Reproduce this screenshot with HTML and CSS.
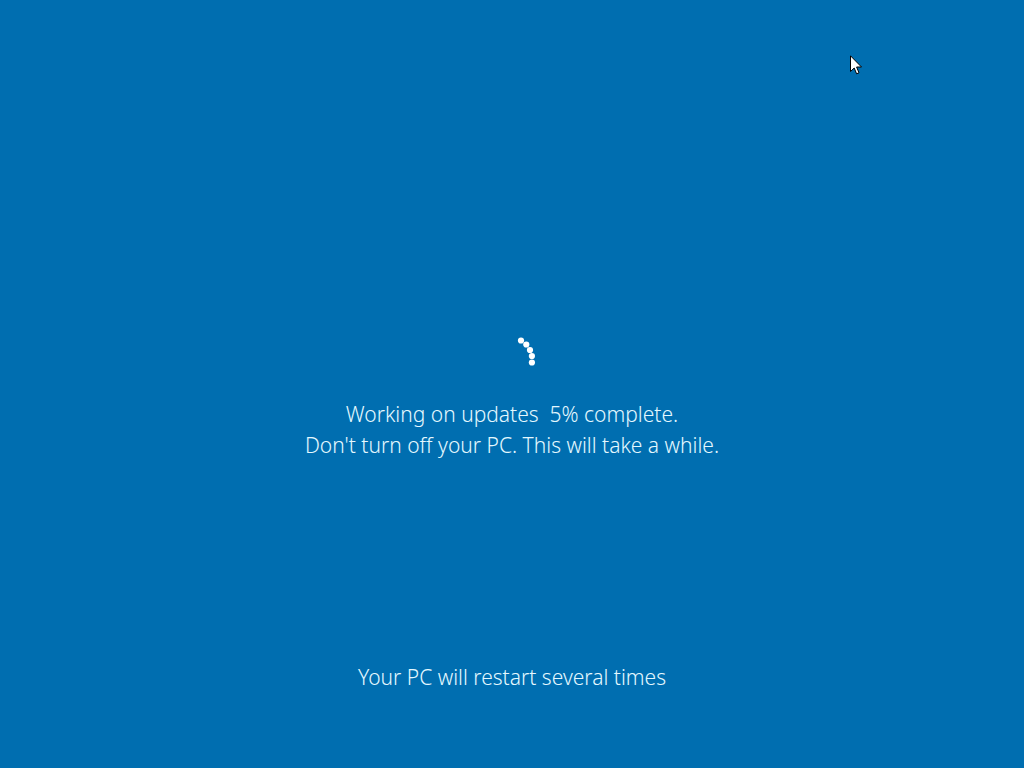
FILE: index.html
```html
<!DOCTYPE html>
<html lang="en">
<head>
    <meta charset="UTF-8">
    <meta name="viewport" content="width=device-width, initial-scale=1.0">
    <title>Working on updates</title>
    <link rel="stylesheet" href="styles.css">
</head>
<body>
    <main class="update-screen">
        <div class="progress">
            <svg class="spinner" width="60" height="60" viewBox="0 0 60 60" aria-hidden="true">
                <circle cx="39" cy="18.5" r="3.1"/>
                <circle cx="44.3" cy="22.5" r="3.1"/>
                <circle cx="48" cy="28" r="3.1"/>
                <circle cx="49.9" cy="34" r="3.1"/>
                <circle cx="49.9" cy="40.5" r="3.1"/>
            </svg>
            <p class="message">Working on updates&nbsp; 5% complete.<br>Don't turn off your PC. This will take a while.</p>
        </div>
        <p class="message">Your PC will restart several times</p>
    </main>

    <!-- Mouse pointer -->
    <svg class="cursor" width="12" height="20" viewBox="0 0 12 20" aria-hidden="true">
        <path d="M.5 .8V16.5L4.2 13L6.6 18.8L9 17.8L6.6 12H11.5Z"/>
    </svg>
</body>
</html>
```

FILE: styles.css
```css
body {
    margin: 0;
    background: #006eb0;
    color: #e4f8ff;
    font-family: "Segoe UI", "Noto Sans", "Open Sans", sans-serif;
}

.update-screen {
    display: flex;
    flex-direction: column;
    align-items: center;
    justify-content: flex-end;
    min-height: 100vh;
    box-sizing: border-box;
    padding-bottom: 75px;
    text-align: center;
}

.progress {
    display: flex;
    flex-direction: column;
    align-items: center;
    gap: 17px;
    margin-bottom: 201px;
}

.spinner {
    fill: white;
}

.message {
    margin: 0;
    font-size: 21px;
    font-weight: 350;
    line-height: 31px;
}

.cursor {
    position: absolute;
    top: 55px;
    left: 850px;
    fill: white;
    stroke: black;
}
```
